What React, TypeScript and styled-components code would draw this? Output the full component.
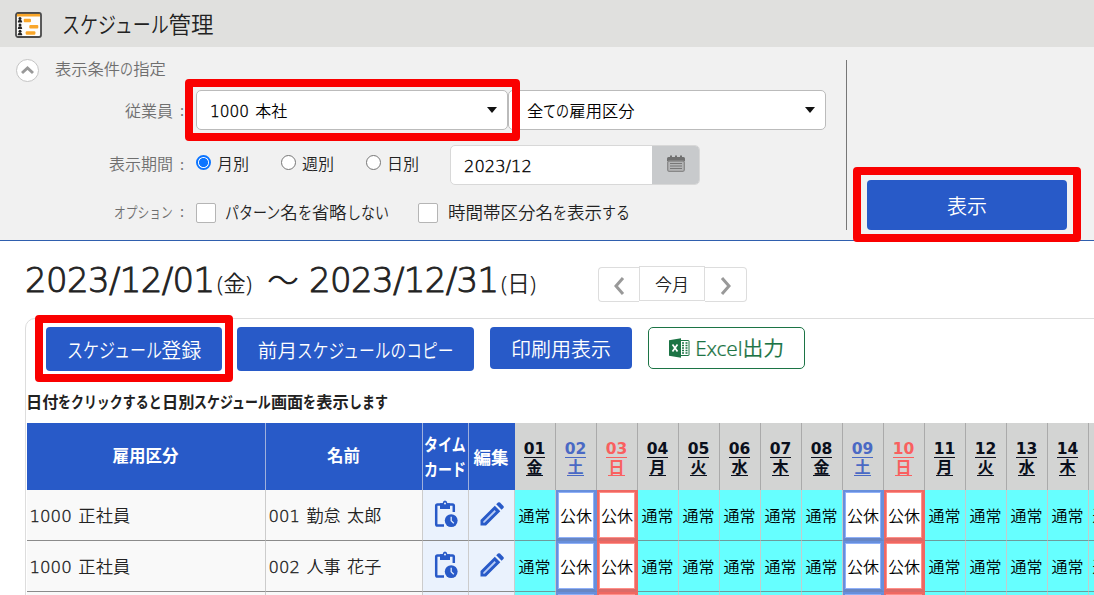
import React from "react";
import styled, { createGlobalStyle, css } from "styled-components";

const BLUE = "#285ac8";
const KANA_RATIO = 0.8;

const GlobalStyle = createGlobalStyle`
  *, *::before, *::after { box-sizing: border-box; }
  body {
    margin: 0;
    overflow: hidden;
    background: #fff;
    color: #222;
    font-family: "Noto Sans", "Noto Sans CJK JP", sans-serif;
  }
  button { font: inherit; cursor: pointer; }
`;

/* ---------- mixed-script text ---------- */

const Line = styled.span<{ $size: number; $weight: number; $color?: string }>`
  display: inline-block;
  white-space: pre;
  font-family: "Noto Sans CJK JP", sans-serif;
  font-size: ${(p) => p.$size}px;
  font-weight: ${(p) => p.$weight};
  line-height: 1.2;
  word-spacing: 0.16em;
  color: ${(p) => p.$color ?? "inherit"};
`;

const Kana = styled.span<{ $count: number }>`
  display: inline-block;
  transform: scaleX(${KANA_RATIO});
  transform-origin: 0 50%;
  margin-right: ${(p) => -(1 - KANA_RATIO) * p.$count}em;
`;

const Latin = styled.span`
  font-family: "DejaVu Sans", sans-serif;
  font-size: 0.96em;
  font-weight: 300;
  -webkit-text-stroke: 0.4px currentColor;
`;

type TextProps = { children: string; size?: number; weight?: number; color?: string };

function Text({ children, size = 16, weight = 350, color }: TextProps) {
  const runs = children.match(/[ぁ-んァ-ヶー]+|[0-9/]+|[^ぁ-んァ-ヶー0-9/]+/g) ?? [];
  return (
    <Line $size={size} $weight={weight} $color={color}>
      {runs.map((run, i) => {
        if (/^[ぁ-んァ-ヶー]/.test(run)) return <Kana key={i} $count={run.length}>{run}</Kana>;
        if (/^[0-9/]/.test(run)) return <Latin key={i}>{run}</Latin>;
        return <span key={i}>{run}</span>;
      })}
    </Line>
  );
}

/* ---------- page frame ---------- */

const Page = styled.div`
  width: 1094px;
  height: 595px;
  overflow: hidden;
`;

const TitleBar = styled.header`
  display: flex;
  align-items: center;
  gap: 20px;
  height: 47px;
  padding: 2px 15px 0;
  background: #e0e0de;
`;

const TitleText = styled.div`
  padding-bottom: 2px;
`;

const Highlight = styled.span<{ $top: number; $right: number; $bottom: number; $left: number }>`
  position: absolute;
  z-index: 2;
  top: ${(p) => -p.$top}px;
  right: ${(p) => -p.$right}px;
  bottom: ${(p) => -p.$bottom}px;
  left: ${(p) => -p.$left}px;
  border: 8px solid #fa0000;
  border-radius: 4px;
  pointer-events: none;
`;

/* ---------- search conditions ---------- */

const Conditions = styled.section`
  display: flex;
  height: 194px;
  padding-top: 13px;
  background: #f1f1f1;
  border-bottom: 1px solid #2f5fae;
`;

const Fields = styled.div`
  width: 847px;
  height: 170px;
  border-right: 1px solid #777;
`;

const SectionTitle = styled.div`
  display: flex;
  align-items: center;
  gap: 16px;
  height: 20px;
  padding-left: 16px;
`;

const SectionName = styled.div`
  padding-bottom: 3px;
`;

const CollapseButton = styled.button`
  display: flex;
  align-items: center;
  justify-content: center;
  width: 23px;
  height: 23px;
  padding: 0;
  border: 1px solid #c4c4c4;
  border-radius: 50%;
  background: #fff;
`;

const FieldRow = styled.div<{ $height: number; $top: number }>`
  display: flex;
  align-items: center;
  height: ${(p) => p.$height}px;
  margin-top: ${(p) => p.$top}px;
`;

const FieldLabel = styled.div<{ $lower?: boolean }>`
  display: flex;
  justify-content: flex-end;
  align-items: center;
  width: 184px;
  margin-right: 12px;
  ${(p) => (p.$lower ? "padding-top: 1px;" : "padding-bottom: 2px;")}
  color: #6f6f6f;
`;

const Colon = styled.span`
  margin-left: 7px;
  font-size: 15px;
  line-height: 1;
`;

const SelectBox = styled.div<{ $width: number; $pad: number }>`
  position: relative;
  display: flex;
  align-items: center;
  justify-content: space-between;
  width: ${(p) => p.$width}px;
  height: 40px;
  padding: 0 10px 0 ${(p) => p.$pad}px;
  border: 1px solid #bbb;
  border-radius: 5px;
  background: #fff;
  color: #000;
`;

const SelectValue = styled.span`
  padding-top: 2px;
`;

const Caret = styled.span`
  border: 5.5px solid transparent;
  border-top: 6px solid #111;
  border-bottom: 0;
`;

const RadioOption = styled.label<{ $width: number }>`
  display: flex;
  align-items: center;
  gap: 6px;
  width: ${(p) => p.$width}px;
  padding-bottom: 2px;
`;

const RadioDot = styled.span<{ $on?: boolean }>`
  width: 15px;
  height: 15px;
  margin-top: -4px;
  border: 1px solid #767676;
  border-radius: 50%;
  background: #fff;
  ${(p) =>
    p.$on &&
    css`
      border: 2px solid #0d75ff;
      background: radial-gradient(circle, #0d75ff 4.2px, #fff 4.9px);
    `}
`;

const DateField = styled.div`
  display: flex;
  width: 250px;
  height: 40px;
  border: 1px solid #d8d8d8;
  border-radius: 5px;
  background: #fff;
  overflow: hidden;
  color: #000;
`;

const DateValue = styled.div`
  display: flex;
  align-items: center;
  flex: 1;
  padding: 1px 0 0 13px;
`;

const CalendarButton = styled.button`
  display: flex;
  align-items: center;
  justify-content: center;
  width: 48px;
  margin: -1px -1px -1px 0;
  padding: 0 0 3px;
  border: 0;
  background: #c8cacc;
`;

const CheckOption = styled.label<{ $width: number; $gap: number }>`
  display: flex;
  align-items: center;
  gap: ${(p) => p.$gap}px;
  width: ${(p) => p.$width}px;
`;

const CheckText = styled.span`
  padding-bottom: 2px;
`;

const CheckSquare = styled.span`
  width: 20px;
  height: 20px;
  border: 1px solid #b5b5b5;
  border-radius: 2px;
  background: #fff;
`;

const SubmitArea = styled.div`
  display: flex;
  flex-direction: column;
  justify-content: flex-end;
  height: 170px;
  padding-left: 20px;
`;

const PrimaryButton = styled.button<{ $width: number; $height: number }>`
  position: relative;
  display: flex;
  align-items: center;
  justify-content: center;
  width: ${(p) => p.$width}px;
  height: ${(p) => p.$height}px;
  padding: 1px 0 0;
  border: 0;
  border-radius: 4px;
  background: ${BLUE};
  color: #fff;
`;

/* ---------- period ---------- */

const PeriodBar = styled.div`
  display: flex;
  height: 77px;
  padding-left: 25px;
`;

const PeriodTitle = styled.h1`
  display: flex;
  align-items: baseline;
  width: 573px;
  margin: 0;
  padding-top: 17px;
  font-weight: 350;
  white-space: pre;
`;

const BigDate = styled.span`
  width: 191px;
  font-family: "DejaVu Sans", sans-serif;
  font-size: 34px;
  font-weight: 300;
  letter-spacing: -0.65px;
  line-height: 40px;
  -webkit-text-stroke: 0.9px currentColor;
`;

const DayOfWeek = styled.span`
  width: 40px;
  margin-left: 1px;
  font-family: "Noto Sans", "Noto Sans CJK JP", sans-serif;
  font-size: 22.500px;
  line-height: 40px;
`;

const Wave = styled.span`
  width: 52px;
  font-family: "Noto Sans CJK JP", sans-serif;
  font-size: 32px;
  line-height: 40px;
  text-align: center;
`;

const Pager = styled.div`
  display: flex;
  height: 35px;
  margin-top: 26px;
`;

const PagerButton = styled.button<{ $width: number; $side?: "left" | "right" }>`
  display: flex;
  align-items: center;
  justify-content: center;
  width: ${(p) => p.$width}px;
  height: 35px;
  padding: 0;
  border: 1px solid #ddd;
  background: #fff;
  color: #222;
  ${(p) => p.$side === "left" && css`border-right: 0; border-radius: 4px 0 0 4px; padding-top: 3px;`}
  ${(p) => p.$side === "right" && css`border-left: 0; border-radius: 0 4px 4px 0; padding-top: 3px;`}
  ${(p) => !p.$side && css`margin-top: -1px; padding-top: 1px;`}
`;

/* ---------- schedule ---------- */

const Board = styled.section`
  width: 1100px;
  height: 300px;
  margin-left: 25px;
  padding-top: 8px;
  border: 1px solid #ddd;
  border-radius: 10px 0 0 0;
`;

const Toolbar = styled.div`
  display: flex;
  align-items: flex-start;
  height: 44px;
  padding-left: 20px;
`;

const ToolItem = styled.div<{ $gap?: number }>`
  margin-left: ${(p) => p.$gap ?? 0}px;
`;

const ExcelButton = styled.button`
  display: flex;
  align-items: center;
  justify-content: center;
  gap: 5px;
  width: 157px;
  height: 42px;
  padding: 0;
  border: 1px solid #1c7445;
  border-radius: 5px;
  background: #fff;
  color: #1c7445;
`;

const ExcelLabel = styled.span`
  font-family: "Noto Sans", "Noto Sans CJK JP", sans-serif;
  font-size: 20.800px;
  font-weight: 350;
  letter-spacing: -0.1px;
  line-height: 24px;
  -webkit-text-stroke: 0.2px currentColor;
`;

const Notice = styled.p`
  display: flex;
  align-items: center;
  height: 20px;
  margin: 21px 0 11px;
`;

const Grid = styled.div`
  width: 1200px;
  margin-left: 1px;
`;

const Row = styled.div<{ $head?: boolean }>`
  display: grid;
  grid-template-columns: 239px 157px 46px 46px repeat(15, 41px);
  height: ${(p) => (p.$head ? 67 : 51)}px;
`;

const HeadCell = styled.div<{ $last?: boolean }>`
  display: flex;
  flex-direction: column;
  align-items: center;
  justify-content: center;
  gap: 4px;
  padding: 0 1px 1px 0;
  background: ${BLUE};
  border-right: 1px solid ${(p) => (p.$last ? BLUE : "#9fb0dc")};
  color: #fff;
`;

type DayKind = "week" | "sat" | "sun";
const dayColor = { week: "#0a0f1c", sat: "#4a69c4", sun: "#f9605f" };

const DayHead = styled.a<{ $kind: DayKind }>`
  display: flex;
  flex-direction: column;
  align-items: center;
  justify-content: center;
  padding-top: 4px;
  padding-right: 1px;
  background: #d3d4d3;
  border-right: 1px solid #aaa;
  color: ${(p) => dayColor[p.$kind]};
  font-weight: 700;
  font-size: 16px;
  font-family: "Noto Sans CJK JP", sans-serif;
`;

const DayNumber = styled.span`
  height: 17px;
  border-bottom: 1px solid currentColor;
  font-family: "DejaVu Sans", sans-serif;
  font-size: 15.500px;
  line-height: 17px;
`;

const DayName = styled.span`
  height: 18px;
  border-bottom: 1px solid currentColor;
  line-height: 16px;
`;

const BodyCell = styled.div<{ $tint?: boolean }>`
  display: flex;
  align-items: center;
  justify-content: ${(p) => (p.$tint ? "center" : "flex-start")};
  padding: ${(p) => (p.$tint ? "0 0 2px 0" : "1px 0 0 2.500px")};
  background: ${(p) => (p.$tint ? "#eaf2fd" : "#f9f9f9")};
  border-right: 1px solid #ccc;
  border-bottom: 1px solid #8b8b8b;
`;

const ShiftCell = styled.div<{ $kind: DayKind }>`
  display: flex;
  align-items: center;
  justify-content: center;
  color: #000;
  ${(p) =>
    p.$kind === "week"
      ? css`
          padding: 1px 1px 0 0;
          background: #66ffff;
          border-right: 1px solid #c3cccc;
          border-bottom: 1px solid #6c9c9c;
        `
      : css`
          padding-top: 2px;
          background: #fff;
          border: 2px solid ${p.$kind === "sat" ? "#678fdc" : "#ef6862"};
          border-bottom: 3px solid ${p.$kind === "sat" ? "#6786c4" : "#dc6a67"};
          border-right-width: 3px;
          box-shadow: inset 0 0 0 1px ${p.$kind === "sat" ? "#8fb0f8" : "#ff8f88"};
        `}
`;

/* ---------- icons ---------- */

const ScheduleIcon = () => (
  <svg width="27" height="26" viewBox="0 0 27 26">
    <rect x="1" y="1" width="25" height="24" rx="2" fill="#fdfdfb" stroke="#4a4a4a" strokeWidth="1.8" />
    <rect x="2" y="1.9" width="23" height="2.600" fill="#f9a629" />
    {[5.2, 11.6, 17.9].map((y) => (
      <g key={y} fill="#222">
        <circle cx="5" cy={y + 1.4} r="1.500" />
        <path d={`M2.900 ${y + 5.3}v-1q0-1.700 2.100-1.700t2.100 1.700v1z`} />
      </g>
    ))}
    <rect x="8.700" y="6.800" width="7.300" height="3.400" rx="1" fill="#f9a629" />
    <rect x="14.300" y="13" width="9" height="3.400" rx="1" fill="#f9a629" />
    <rect x="10.700" y="19.300" width="9.700" height="3.400" rx="1" fill="#f9a629" />
  </svg>
);

const Chevron = ({ d, w = 12, h = 20, sw = 3 }: { d: string; w?: number; h?: number; sw?: number }) => (
  <svg width={w} height={h} viewBox={`0 0 ${w} ${h}`} fill="none" stroke="#999" strokeWidth={sw}>
    <path d={d} />
  </svg>
);

const CalendarIcon = () => (
  <svg width="18" height="17" viewBox="0 0 18 17">
    <path d="M0 3.5Q0 2 1.5 2H3V.5h2V2h3V.5h2V2h3V.5h2V2h1.500q1.500 0 1.500 1.500V6H0z" fill="#707070" />
    <rect x=".7" y="6" width="16.600" height="10.300" rx="1.500" fill="#b4b5b6" stroke="#888" strokeWidth="1.300" />
    <path d="M3 8.500h12M3 11h12M3 13.500h12" stroke="#777" strokeWidth="1" />
  </svg>
);

const ExcelIcon = () => (
  <svg width="21" height="20" viewBox="0 0 21 20">
    <rect x="10" y="2.500" width="10" height="15" rx=".5" fill="#fff" stroke="#1c7445" />
    <path d="M13 5h2M13 7.500h2M13 10h2M13 12.500h2M13 15h2M16.500 5h2M16.500 7.500h2M16.500 10h2M16.500 12.500h2M16.500 15h2" stroke="#1c7445" strokeWidth="1.500" />
    <path d="M0 2.300 12 .3v19.400L0 17.700z" fill="#1c7445" />
    <path d="m3.500 6.500 5 7M8.500 6.500l-5 7" stroke="#fff" strokeWidth="1.700" />
  </svg>
);

const TimecardIcon = () => (
  <svg width="24" height="28" viewBox="0 0 24 28">
    <path d="M10 25.500H3.500q-1.300 0-1.300-1.300V5.800q0-1.300 1.300-1.300h15q1.300 0 1.300 1.300V12" fill="none" stroke={BLUE} strokeWidth="2.500" />
    <path d="M6 3.200h2.600Q9 .6 11 .6t2.400 2.600H16V9H6z" fill={BLUE} />
    <circle cx="11" cy="3.500" r="1" fill="#eaf2fd" />
    <circle cx="17.200" cy="20.600" r="6.400" fill={BLUE} />
    <path d="M17.200 16.800v4l2.600 2.400" fill="none" stroke="#dfeafd" strokeWidth="1.300" />
  </svg>
);

const PencilIcon = () => (
  <svg width="24" height="24" viewBox="0 0 24 24">
    <path d="M.5 23.500v-5.500L14.800 3.700l5.500 5.500L6 23.500zM16.200 2.300 18 .6q1-.9 2 0l3.400 3.400q.9 1 0 2l-1.800 1.800z" fill={BLUE} />
    <path d="M3.200 20.800v-1.300L14.600 8.100l1.300 1.300L4.500 20.800z" fill="#b9cdf6" />
  </svg>
);

/* ---------- data ---------- */

const weekdays = ["金", "土", "日", "月", "火", "水", "木"];
const days = Array.from({ length: 15 }, (_, i) => {
  const name = weekdays[i % 7];
  const kind: DayKind = name === "土" ? "sat" : name === "日" ? "sun" : "week";
  return { number: String(i + 1).padStart(2, "0"), name, kind };
});

const staff = [
  { type: "1000 正社員", name: "001 勤怠 太郎" },
  { type: "1000 正社員", name: "002 人事 花子" },
  { type: "", name: "" },
];

export default function App() {
  return (
    <Page>
      <GlobalStyle />
      <TitleBar>
        <ScheduleIcon />
        <TitleText><Text size={22.5}>スケジュール管理</Text></TitleText>
      </TitleBar>

      <Conditions>
        <Fields>
          <SectionTitle>
            <CollapseButton aria-label="折りたたむ">
              <Chevron d="M1 8 6.500 3 12 8" w={13} h={10} />
            </CollapseButton>
            <SectionName><Text size={16.300} color="#6f6f6f">表示条件の指定</Text></SectionName>
          </SectionTitle>

          <FieldRow $height={40} $top={10}>
            <FieldLabel $lower><Text>従業員</Text><Colon>:</Colon></FieldLabel>
            <SelectBox $width={312} $pad={13}>
              <SelectValue><Text>1000 本社</Text></SelectValue>
              <Caret />
              <Highlight $top={12} $right={13} $bottom={12} $left={12} />
            </SelectBox>
            <SelectBox $width={318} $pad={18}>
              <SelectValue><Text size={16.300}>全ての雇用区分</Text></SelectValue>
              <Caret />
            </SelectBox>
          </FieldRow>

          <FieldRow $height={40} $top={15}>
            <FieldLabel><Text>表示期間</Text><Colon>:</Colon></FieldLabel>
            <RadioOption $width={85}><RadioDot $on /><Text>月別</Text></RadioOption>
            <RadioOption $width={85}><RadioDot /><Text>週別</Text></RadioOption>
            <RadioOption $width={84}><RadioDot /><Text>日別</Text></RadioOption>
            <DateField>
              <DateValue><Text size={17}>2023/12</Text></DateValue>
              <CalendarButton aria-label="カレンダー"><CalendarIcon /></CalendarButton>
            </DateField>
          </FieldRow>

          <FieldRow $height={24} $top={16}>
            <FieldLabel><Text size={14.700}>オプション</Text><Colon>:</Colon></FieldLabel>
            <CheckOption $width={222} $gap={9}><CheckSquare /><CheckText><Text size={17.500}>パターン名を省略しない</Text></CheckText></CheckOption>
            <CheckOption $width={222} $gap={10}><CheckSquare /><CheckText><Text size={17.500}>時間帯区分名を表示する</Text></CheckText></CheckOption>
          </FieldRow>
        </Fields>

        <SubmitArea>
          <PrimaryButton $width={200} $height={50}>
            <Text size={20}>表示</Text>
            <Highlight $top={13} $right={14} $bottom={12} $left={14} />
          </PrimaryButton>
        </SubmitArea>
      </Conditions>

      <PeriodBar>
        <PeriodTitle>
          <BigDate>2023/12/01</BigDate><DayOfWeek>(金)</DayOfWeek>
          <Wave>～</Wave>
          <BigDate>2023/12/31</BigDate><DayOfWeek>(日)</DayOfWeek>
        </PeriodTitle>
        <Pager>
          <PagerButton $width={41} $side="left" aria-label="前月"><Chevron d="M10 2 3 10l7 8" /></PagerButton>
          <PagerButton $width={66}><Text size={17}>今月</Text></PagerButton>
          <PagerButton $width={42} $side="right" aria-label="翌月"><Chevron d="m2 2 7 8-7 8" /></PagerButton>
        </Pager>
      </PeriodBar>

      <Board>
        <Toolbar>
          <ToolItem>
            <PrimaryButton $width={176} $height={44}>
              <Text size={20}>スケジュール登録</Text>
              <Highlight $top={12} $right={11} $bottom={11} $left={11} />
            </PrimaryButton>
          </ToolItem>
          <ToolItem $gap={15}>
            <PrimaryButton $width={237} $height={44}><Text size={19.700}>前月スケジュールのコピー</Text></PrimaryButton>
          </ToolItem>
          <ToolItem $gap={16}>
            <PrimaryButton $width={142} $height={42}><Text size={20}>印刷用表示</Text></PrimaryButton>
          </ToolItem>
          <ToolItem $gap={16}>
            <ExcelButton><ExcelIcon /><ExcelLabel>Excel出力</ExcelLabel></ExcelButton>
          </ToolItem>
        </Toolbar>

        <Notice><Text size={16.200} weight={700}>日付をクリックすると日別スケジュール画面を表示します</Text></Notice>

        <Grid>
          <Row $head>
            <HeadCell><Text weight={700} size={16.500}>雇用区分</Text></HeadCell>
            <HeadCell><Text weight={700} size={16.500}>名前</Text></HeadCell>
            <HeadCell><Text weight={700} size={17.500}>タイム</Text><Text weight={700} size={17.500}>カード</Text></HeadCell>
            <HeadCell $last><Text weight={700} size={17.500}>編集</Text></HeadCell>
            {days.map((d) => (
              <DayHead key={d.number} $kind={d.kind}>
                <DayNumber>{d.number}</DayNumber>
                <DayName>{d.name}</DayName>
              </DayHead>
            ))}
          </Row>
          {staff.map((s, i) => (
            <Row key={i}>
              <BodyCell><Text size={17.300}>{s.type}</Text></BodyCell>
              <BodyCell><Text size={17.100}>{s.name}</Text></BodyCell>
              <BodyCell $tint><TimecardIcon /></BodyCell>
              <BodyCell $tint><PencilIcon /></BodyCell>
              {days.map((d) => (
                <ShiftCell key={d.number} $kind={d.kind}>
                  <Text size={16}>{s.name && (d.kind === "week" ? "通常" : "公休")}</Text>
                </ShiftCell>
              ))}
            </Row>
          ))}
        </Grid>
      </Board>
    </Page>
  );
}
